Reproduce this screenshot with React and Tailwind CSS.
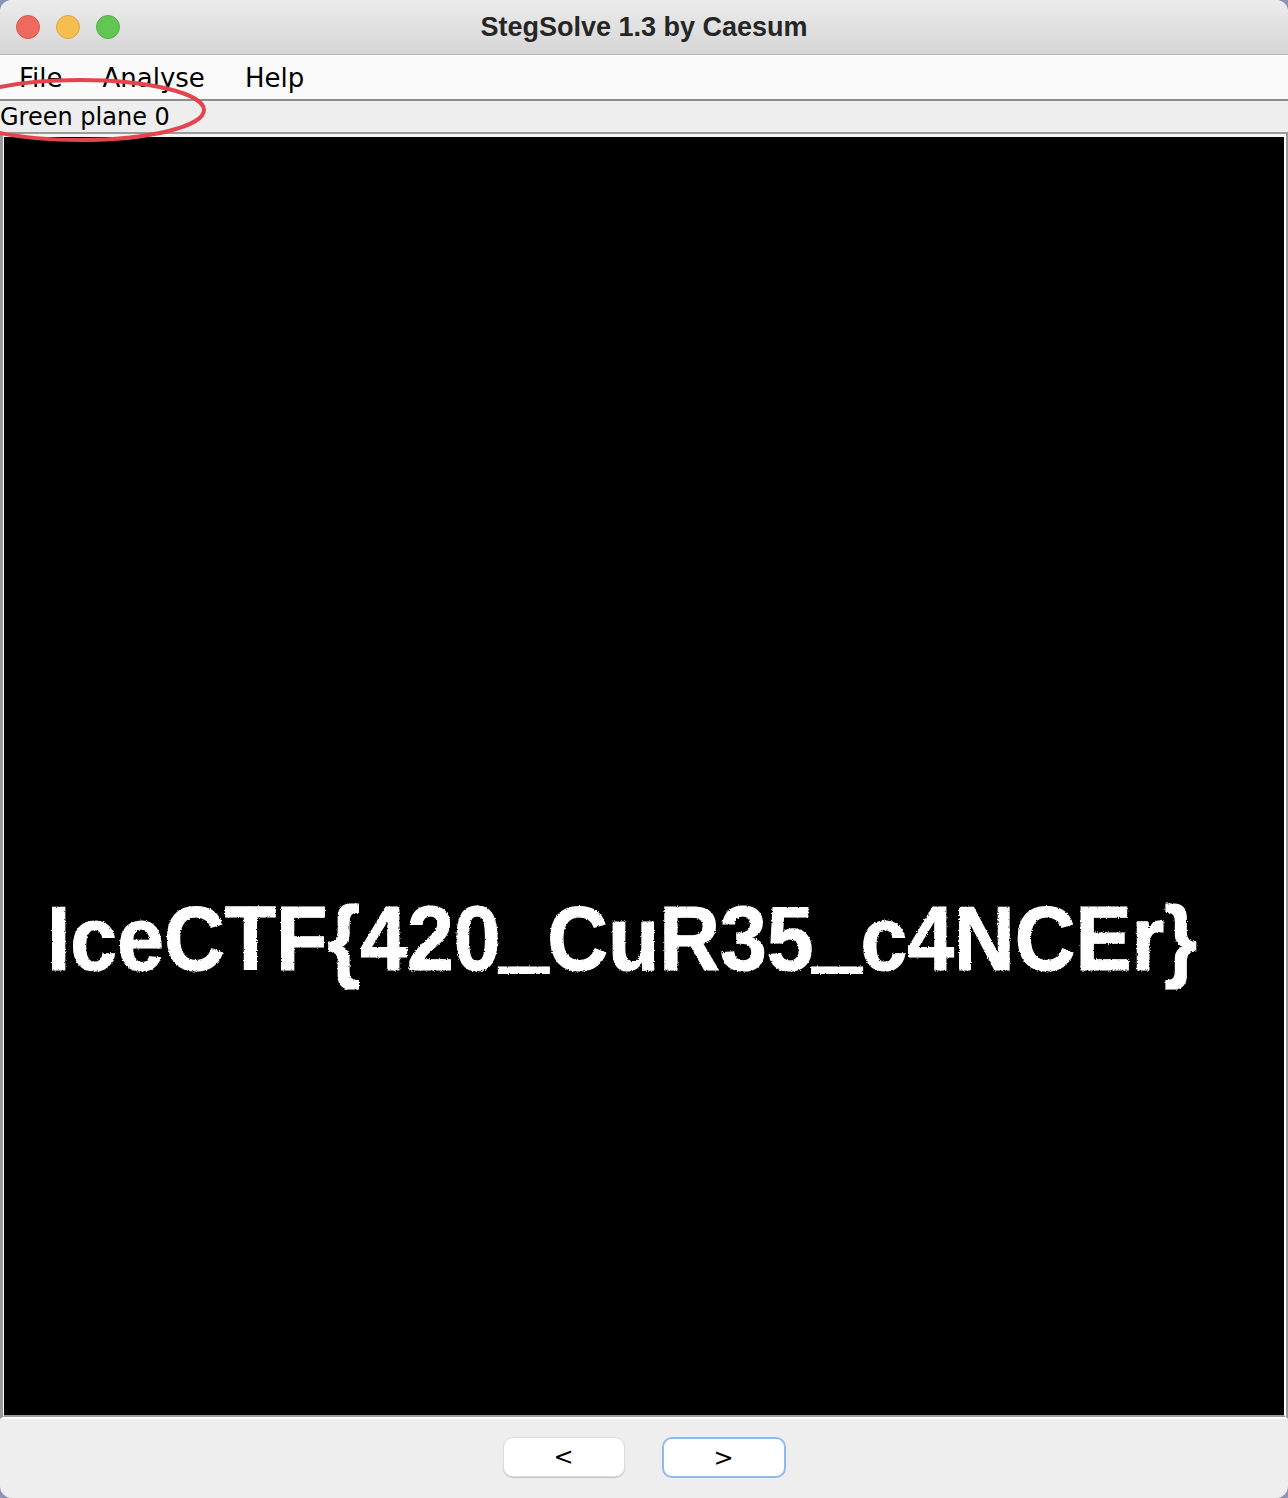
import React from 'react';

const sans = { fontFamily: '"DejaVu Sans", "Noto Sans", sans-serif' };

function TrafficLights() {
  return (
    <div className="flex items-center gap-[16px] pl-[16px]">
      <span className="w-[24px] h-[24px] rounded-full bg-[#ee6a5f] border border-[#d8564b]" />
      <span className="w-[24px] h-[24px] rounded-full bg-[#f5be4f] border border-[#dca544]" />
      <span className="w-[24px] h-[24px] rounded-full bg-[#62c554] border border-[#55ad48]" />
    </div>
  );
}

function FlagImage() {
  const bar = { stroke: '#ffffff', strokeWidth: 4 };
  return (
    <svg viewBox="0 0 1280 1278" className="block w-full h-full" preserveAspectRatio="none">
      <defs>
        <filter id="dither" x="-5%" y="-20%" width="110%" height="140%">
          <feTurbulence type="fractalNoise" baseFrequency="0.9" numOctaves="1" seed="3" result="n" />
          <feDisplacementMap in="SourceGraphic" in2="n" scale="3" xChannelSelector="R" yChannelSelector="G" />
        </filter>
      </defs>
      <text
        x="43"
        y="833"
        fill="#ffffff"
        stroke="#ffffff"
        strokeWidth="1.2"
        fontSize="91"
        fontWeight="bold"
        textLength="1150"
        lengthAdjust="spacingAndGlyphs"
        filter="url(#dither)"
        style={{ fontFamily: '"Liberation Sans", Arial, sans-serif' }}
      >
        IceCTF{'{'}420
        <tspan dy="-9" style={bar}>_</tspan>
        <tspan dy="9">CuR35</tspan>
        <tspan dy="-9" style={bar}>_</tspan>
        <tspan dy="9">c4NCEr{'}'}</tspan>
      </text>
    </svg>
  );
}

export default function App() {
  return (
    <div className="w-[1288px] h-[1498px] bg-[#8f94b6] overflow-hidden">
      <div className="relative flex flex-col w-full h-full bg-[#eeeeee] rounded-[12px] overflow-hidden">
        {/* Title bar */}
        <header className="relative flex items-center h-[55px] shrink-0 bg-gradient-to-b from-[#ececec] to-[#d6d6d6] border-b border-[#b9b9b9]">
          <TrafficLights />
          <div
            className="absolute inset-0 flex items-center justify-center text-[27px] font-bold text-[#262626]"
            style={{ fontFamily: '"Liberation Sans", Arial, sans-serif' }}
          >
            StegSolve 1.3 by Caesum
          </div>
        </header>

        {/* Menu bar */}
        <nav
          className="flex items-center h-[46px] shrink-0 bg-[#fafafa] border-b-2 border-[#8c8c8c] text-[26px] text-black pt-[2px]"
          style={sans}
        >
          <span className="ml-[19px]">File</span>
          <span className="ml-[40px]">Analyse</span>
          <span className="ml-[40px]">Help</span>
        </nav>

        {/* Plane label */}
        <div className="flex items-center h-[31px] shrink-0 text-[24px] text-black leading-none pt-[1px]" style={sans}>
          Green plane 0
        </div>

        {/* Image panel */}
        <div className="shrink-0 border-t-2 border-l-[3px] border-r-2 border-[#9b9b9b] border-b-2 border-b-white">
          <div className="h-[1283px] bg-black border-t-[3px] border-t-[#f4f4f4] border-l border-l-white border-r-2 border-r-white border-b-2 border-b-[#9b9b9b]">
            <FlagImage />
          </div>
        </div>

        {/* Navigation buttons */}
        <div className="flex flex-1 items-start justify-center gap-[37px] pt-[18px]" style={sans}>
          <button className="w-[122px] h-[40px] flex items-center justify-center bg-white rounded-[10px] border border-[#dcdcdc] shadow-[0_1px_1px_rgba(0,0,0,0.18)] text-[24px] text-black">
            &lt;
          </button>
          <button className="w-[124px] h-[41px] flex items-center justify-center bg-white rounded-[10px] border-2 border-[#8dbaf0] text-[24px] text-black">
            &gt;
          </button>
        </div>

        {/* Red annotation ellipse */}
        <svg className="absolute left-0 top-0 w-[260px] h-[160px] pointer-events-none" viewBox="0 0 260 160">
          <ellipse cx="80" cy="110" rx="124" ry="30" fill="none" stroke="#e5444f" strokeWidth="4" />
        </svg>
      </div>
    </div>
  );
}
